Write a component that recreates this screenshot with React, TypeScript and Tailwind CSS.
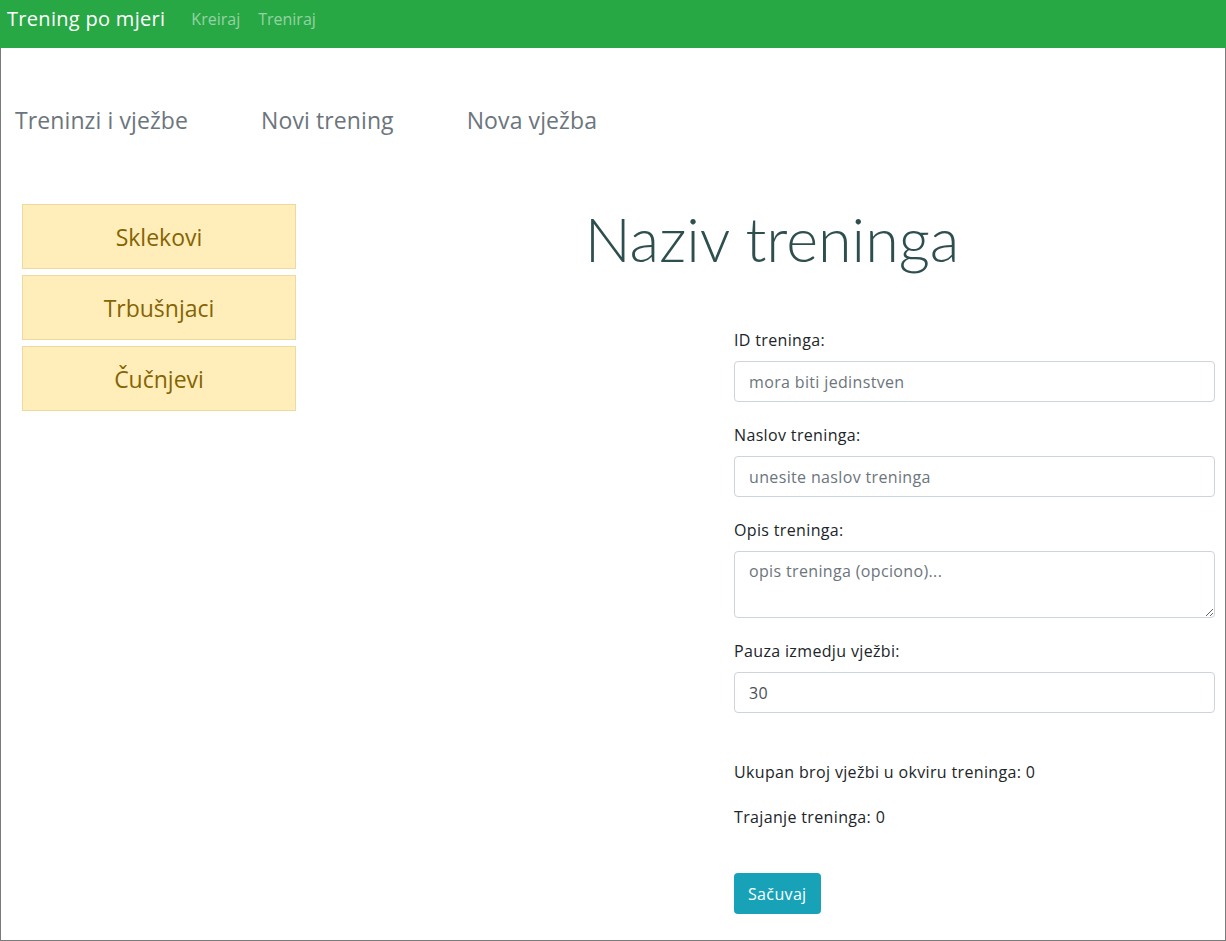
import React from "react";

export default function App() {
  const vjezbe = ["Sklekovi", "Trbušnjaci", "Čučnjevi"];
  const tabs = ["Treninzi i vježbe", "Novi trening", "Nova vježba"];

  return (
    <div className="min-h-screen bg-white font-['Open_Sans','Lato',sans-serif] text-[#212529]">
      {/* Navbar */}
      <nav className="flex h-[48px] items-start bg-[#28a745] px-[7px] pt-[4px]">
        <span className="text-[20px] leading-[30px] tracking-[0.3px] text-white">Trening po mjeri</span>
        <div className="ml-[26px] flex gap-[18px] text-[16px] leading-[30px] text-white/50">
          <a href="#">Kreiraj</a>
          <a href="#">Treniraj</a>
        </div>
      </nav>

      <div className="h-[893px] border-x border-b border-[#7a7a7a]">
        {/* Tabs */}
        <div className="flex gap-[73px] pl-[14px] pt-[54px] text-[23px] leading-[36px] tracking-[0.1px] text-[#6c757d]">
          {tabs.map((t) => (
            <span key={t}>{t}</span>
          ))}
        </div>

        <div className="mt-[66px] flex">
          {/* Left list */}
          <div className="w-[306px] pl-[21px]">
            <div className="flex w-[274px] flex-col gap-[6px]">
              {vjezbe.map((v) => (
                <div
                  key={v}
                  className="flex h-[65px] items-center justify-center border border-[#eed9a0] bg-[#ffeeba] pt-[2px] text-[23px] text-[#856404]"
                >
                  {v}
                </div>
              ))}
            </div>
          </div>

          {/* Right column */}
          <div className="flex-1">
            <h1 className="pl-[12px] text-center font-['Lato',sans-serif] text-[61px] font-light leading-[70px] text-[#2f4f4f]">
              Naziv treninga
            </h1>

            <form className="ml-auto mr-[10px] mt-[54px] w-[481px] text-[16px] tracking-[0.35px]">
              <label className="mb-[9px] block leading-[24px]">ID treninga:</label>
              <input
                className="mb-[21px] block h-[41px] w-full rounded-[4px] border border-[#ced4da] px-[14px] text-[#495057] placeholder:text-[#6c757d]"
                placeholder="mora biti jedinstven"
              />

              <label className="mb-[9px] block leading-[24px]">Naslov treninga:</label>
              <input
                className="mb-[21px] block h-[41px] w-full rounded-[4px] border border-[#ced4da] px-[14px] text-[#495057] placeholder:text-[#6c757d]"
                placeholder="unesite naslov treninga"
              />

              <label className="mb-[9px] block leading-[24px]">Opis treninga:</label>
              <textarea
                className="mb-[21px] block h-[67px] w-full rounded-[4px] border border-[#ced4da] px-[14px] py-[7px] leading-[24px] text-[#495057] placeholder:text-[#6c757d]"
                placeholder="opis treninga (opciono)..."
              />

              <label className="mb-[9px] block leading-[24px]">Pauza izmedju vježbi:</label>
              <input
                className="block h-[41px] w-full rounded-[4px] border border-[#ced4da] px-[14px] text-[#495057]"
                defaultValue="30"
              />

              <p className="mt-[47px] leading-[24px]">Ukupan broj vježbi u okviru treninga: 0</p>
              <p className="mt-[21px] leading-[24px]">Trajanje treninga: 0</p>

              <button
                type="button"
                className="mt-[44px] h-[41px] rounded-[4px] bg-[#17a2b8] px-[14px] text-white"
              >
                Sačuvaj
              </button>
            </form>
          </div>
        </div>
      </div>
    </div>
  );
}
